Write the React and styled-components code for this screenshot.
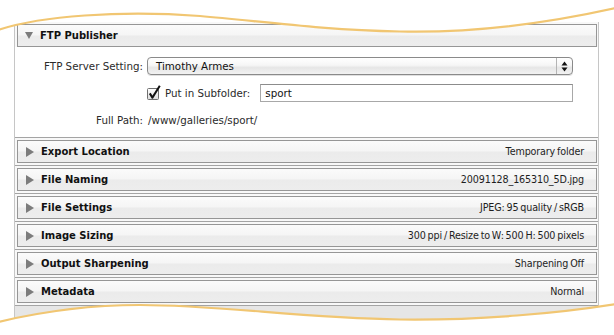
import React from 'react'
import styled, { createGlobalStyle } from 'styled-components'

const GlobalStyle = createGlobalStyle`
  html, body {
    margin: 0;
    padding: 0;
    background: #fff;
  }
  body {
    font-family: "DejaVu Sans", "Liberation Sans", sans-serif;
    color: #222;
  }
`

const Stage = styled.div`
  position: relative;
  width: 614px;
  height: 335px;
  overflow: hidden;
  background: #fff;
`

const Panel = styled.div`
  margin: 22px 0 0 14px;
  width: 583px;
  height: 320px;
  border-left: 1px solid #c6c6c6;
  border-right: 1px solid #c6c6c6;
  background: #e6e6e6;
`

const Section = styled.div`
  background: #f8f8f8;
  border-bottom: 1px solid #a4a4a4;
  padding: ${p => (p.$open ? '2px 1px 0 2px' : '2px 1px 2px 2px')};
`

const Header = styled.div`
  display: flex;
  align-items: center;
  height: 21px;
  padding: 0 12px 0 6px;
  border: 1px solid #969696;
  background: linear-gradient(#fbfbfb 0%, #f5f5f5 48%, #ebebeb 52%, #ededed 100%);
`

const Arrow = styled.span`
  width: 0;
  height: 0;
  margin-right: 7px;
  border-style: solid;
  border-color: transparent;
  ${p =>
    p.$open
      ? `
    border-width: 7px 4.5px 0 4.5px;
    border-top-color: #7c7c7c;
    margin-left: 1px;
  `
      : `
    border-width: 5px 0 5px 8px;
    border-left-color: #7c7c7c;
    margin-left: 2px;
  `}
`

const Title = styled.span`
  flex: 1;
  font-size: 10px;
  font-weight: bold;
  color: #111;
`

const Summary = styled.span`
  font-size: 9.6px;
  color: #1e1e1e;
  letter-spacing: -0.15px;
  word-spacing: -1px;
`

const Body = styled.div`
  margin: 0 -1px 0 -2px;
  height: 90px;
  background: #fff;
  padding-top: 10px;
  box-sizing: border-box;
  display: grid;
  grid-template-columns: 128px 1fr;
  grid-auto-rows: 18px;
  column-gap: 4px;
  row-gap: 9px;
  font-size: 10.3px;
`

const Label = styled.div`
  display: flex;
  align-items: center;
  justify-content: flex-end;
  color: #2a2a2a;
`

const Cell = styled.div`
  display: flex;
  align-items: center;
  width: 426px;
  color: #2a2a2a;
`

const Select = styled.div`
  flex: 1;
  display: flex;
  align-items: center;
  height: 16px;
  border: 1px solid #8a8a8a;
  border-radius: 4px;
  background: linear-gradient(#ffffff 0%, #f6f6f6 45%, #e6e6e6 60%, #f2f2f2 100%);
  box-shadow: 0 1px 0 rgba(0, 0, 0, 0.12);
`

const SelectText = styled.span`
  flex: 1;
  padding-left: 8px;
  color: #111;
`

const Stepper = styled.span`
  width: 15px;
  height: 100%;
  border-left: 1px solid #b4b4b4;
  display: flex;
  align-items: center;
  justify-content: center;
`

const CheckLabel = styled.span`
  margin: 0 10px 0 3px;
`

const TextField = styled.div`
  flex: 1;
  height: 16px;
  display: flex;
  align-items: center;
  padding-left: 4px;
  border: 1px solid #a8a8a8;
  border-top-color: #8c8c8c;
  background: #fff;
  color: #111;
`

const Value = styled.span`
  padding-left: 1px;
`

const Overlay = styled.svg`
  position: absolute;
  left: 0;
  top: 0;
  pointer-events: none;
`

const Checkbox = () => (
  <svg width="15" height="16" viewBox="0 0 15 16">
    <defs>
      <linearGradient id="cb" x1="0" y1="0" x2="0" y2="1">
        <stop offset="0" stopColor="#ffffff" />
        <stop offset="1" stopColor="#dcdcdc" />
      </linearGradient>
    </defs>
    <rect x="0.5" y="3.5" width="11" height="11" rx="1" fill="url(#cb)" stroke="#6f6f6f" />
    <path d="M2.8 8.4 L5.4 12.6 L12.8 0.8" fill="none" stroke="#111" strokeWidth="2" strokeLinejoin="round" />
  </svg>
)

const Updown = () => (
  <svg width="7" height="11" viewBox="0 0 7 11">
    <path d="M3.5 0.5 L6.5 4.5 L0.5 4.5 Z" fill="#111" />
    <path d="M3.5 10.5 L6.5 6.5 L0.5 6.5 Z" fill="#111" />
  </svg>
)

const sections = [
  { title: 'Export Location', summary: 'Temporary folder' },
  { title: 'File Naming', summary: '20091128_165310_5D.jpg' },
  { title: 'File Settings', summary: 'JPEG: 95 quality / sRGB' },
  { title: 'Image Sizing', summary: '300 ppi / Resize to W: 500 H: 500 pixels' },
  { title: 'Output Sharpening', summary: 'Sharpening Off' },
  { title: 'Metadata', summary: 'Normal' },
]

const TOP = 'M-2,30 C40,16 120,10 200,16 C260,21 320,30 400,31.5 C470,33 540,25 616,8'
const BOTTOM = 'M-2,322 C40,312 90,305 140,305 C220,305 300,318 400,319.5 C480,320.5 560,313 616,304'

export default function App() {
  return (
    <Stage>
      <GlobalStyle />
      <Panel>
        <Section $open>
          <Header>
            <Arrow $open />
            <Title>FTP Publisher</Title>
          </Header>
          <Body>
            <Label>FTP Server Setting:</Label>
            <Cell>
              <Select>
                <SelectText>Timothy Armes</SelectText>
                <Stepper>
                  <Updown />
                </Stepper>
              </Select>
            </Cell>
            <Label />
            <Cell>
              <Checkbox />
              <CheckLabel>Put in Subfolder:</CheckLabel>
              <TextField>sport</TextField>
            </Cell>
            <Label>Full Path:</Label>
            <Cell>
              <Value>/www/galleries/sport/</Value>
            </Cell>
          </Body>
        </Section>
        {sections.map(s => (
          <Section key={s.title}>
            <Header>
              <Arrow />
              <Title>{s.title}</Title>
              <Summary>{s.summary}</Summary>
            </Header>
          </Section>
        ))}
      </Panel>
      <Overlay width="614" height="335" viewBox="0 0 614 335">
        <path d={`${TOP} L616,-2 L-2,-2 Z`} fill="#fff" />
        <path d={TOP} fill="none" stroke="#f1c672" strokeWidth="2.2" />
        <path d={`${BOTTOM} L616,337 L-2,337 Z`} fill="#fff" />
        <path d={BOTTOM} fill="none" stroke="#f1c672" strokeWidth="2.2" />
      </Overlay>
    </Stage>
  )
}
